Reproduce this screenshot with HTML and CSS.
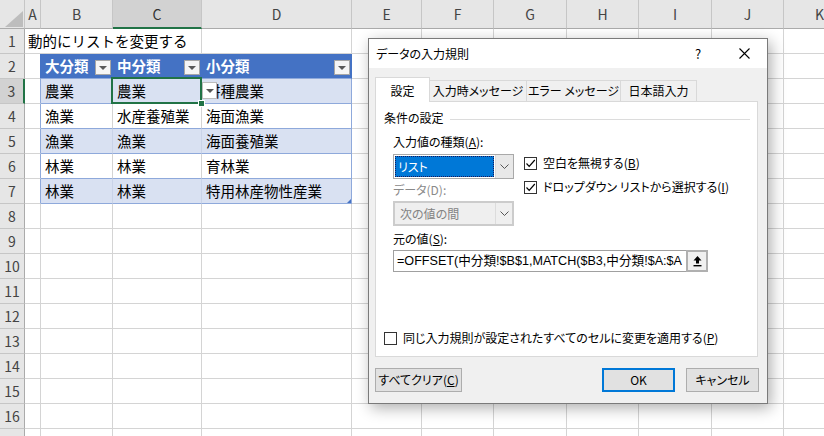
FILE: index.html
```html
<!DOCTYPE html>
<html lang="ja">
<head>
<meta charset="utf-8">
<title>データの入力規則</title>
<link rel="stylesheet" href="styles.css">
</head>
<body>
<div class="sheet">
  <div class="ch corner"><svg width="24" height="28" viewBox="0 0 24 28"><polygon points="5,27 23,27 23,11" fill="#bdbdbd"/></svg></div>
  <div class="ch">A</div><div class="ch">B</div><div class="ch sel">C</div><div class="ch">D</div><div class="ch">E</div><div class="ch">F</div><div class="ch">G</div><div class="ch">H</div><div class="ch">I</div><div class="ch">J</div><div class="ch">K</div>

  <div class="rh">1</div><div class="c title">動的にリストを変更する</div><div class="c"></div><div class="c"></div><div class="c"></div><div class="c"></div><div class="c"></div><div class="c"></div><div class="c"></div><div class="c"></div>

  <div class="rh">2</div><div class="c edge-h"></div>
  <div class="c th">大分類<span class="filter"></span></div>
  <div class="c th">中分類<span class="filter"></span></div>
  <div class="c th">小分類<span class="filter"></span></div>
  <div class="c"></div><div class="c"></div><div class="c"></div><div class="c"></div><div class="c"></div><div class="c"></div><div class="c"></div>

  <div class="rh sel">3</div><div class="c edge"></div>
  <div class="c band">農業</div>
  <div class="c band active">農業<span class="selbox"></span><span class="handle"></span><span class="dd"></span></div>
  <div class="c band last">耕種農業</div>
  <div class="c"></div><div class="c"></div><div class="c"></div><div class="c"></div><div class="c"></div><div class="c"></div><div class="c"></div>

  <div class="rh">4</div><div class="c edge"></div>
  <div class="c plain">漁業</div><div class="c plain">水産養殖業</div><div class="c plain last">海面漁業</div>
  <div class="c"></div><div class="c"></div><div class="c"></div><div class="c"></div><div class="c"></div><div class="c"></div><div class="c"></div>

  <div class="rh">5</div><div class="c edge"></div>
  <div class="c band">漁業</div><div class="c band">漁業</div><div class="c band last">海面養殖業</div>
  <div class="c"></div><div class="c"></div><div class="c"></div><div class="c"></div><div class="c"></div><div class="c"></div><div class="c"></div>

  <div class="rh">6</div><div class="c edge"></div>
  <div class="c plain">林業</div><div class="c plain">林業</div><div class="c plain last">育林業</div>
  <div class="c"></div><div class="c"></div><div class="c"></div><div class="c"></div><div class="c"></div><div class="c"></div><div class="c"></div>

  <div class="rh">7</div><div class="c edge"></div>
  <div class="c band">林業</div><div class="c band">林業</div><div class="c band last corner-end">特用林産物性産業<span class="resize"></span></div>
  <div class="c"></div><div class="c"></div><div class="c"></div><div class="c"></div><div class="c"></div><div class="c"></div><div class="c"></div>

  <div class="rh">8</div><div class="c"></div><div class="c"></div><div class="c"></div><div class="c"></div><div class="c"></div><div class="c"></div><div class="c"></div><div class="c"></div><div class="c"></div><div class="c"></div><div class="c"></div>
  <div class="rh">9</div><div class="c"></div><div class="c"></div><div class="c"></div><div class="c"></div><div class="c"></div><div class="c"></div><div class="c"></div><div class="c"></div><div class="c"></div><div class="c"></div><div class="c"></div>
  <div class="rh">10</div><div class="c"></div><div class="c"></div><div class="c"></div><div class="c"></div><div class="c"></div><div class="c"></div><div class="c"></div><div class="c"></div><div class="c"></div><div class="c"></div><div class="c"></div>
  <div class="rh">11</div><div class="c"></div><div class="c"></div><div class="c"></div><div class="c"></div><div class="c"></div><div class="c"></div><div class="c"></div><div class="c"></div><div class="c"></div><div class="c"></div><div class="c"></div>
  <div class="rh">12</div><div class="c"></div><div class="c"></div><div class="c"></div><div class="c"></div><div class="c"></div><div class="c"></div><div class="c"></div><div class="c"></div><div class="c"></div><div class="c"></div><div class="c"></div>
  <div class="rh">13</div><div class="c"></div><div class="c"></div><div class="c"></div><div class="c"></div><div class="c"></div><div class="c"></div><div class="c"></div><div class="c"></div><div class="c"></div><div class="c"></div><div class="c"></div>
  <div class="rh">14</div><div class="c"></div><div class="c"></div><div class="c"></div><div class="c"></div><div class="c"></div><div class="c"></div><div class="c"></div><div class="c"></div><div class="c"></div><div class="c"></div><div class="c"></div>
  <div class="rh">15</div><div class="c"></div><div class="c"></div><div class="c"></div><div class="c"></div><div class="c"></div><div class="c"></div><div class="c"></div><div class="c"></div><div class="c"></div><div class="c"></div><div class="c"></div>
  <div class="rh">16</div><div class="c"></div><div class="c"></div><div class="c"></div><div class="c"></div><div class="c"></div><div class="c"></div><div class="c"></div><div class="c"></div><div class="c"></div><div class="c"></div><div class="c"></div>
  <div class="rh"></div><div class="c"></div><div class="c"></div><div class="c"></div><div class="c"></div><div class="c"></div><div class="c"></div><div class="c"></div><div class="c"></div><div class="c"></div><div class="c"></div><div class="c"></div>
</div>

<div class="dialog">
  <div class="titlebar">
    <span class="title">データの入力規則</span>
    <span class="tb-btn">?</span>
    <span class="tb-btn"><svg width="11" height="11" viewBox="0 0 11 11"><path d="M0.5 0.5 L10.5 10.5 M10.5 0.5 L0.5 10.5" stroke="#000" stroke-width="1.1" fill="none"/></svg></span>
  </div>
  <div class="dlg-body">
    <div class="tabs">
      <div class="tab active">設定</div>
      <div class="tab w2">入力時メッセージ</div>
      <div class="tab w3">エラー メッセージ</div>
      <div class="tab w4">日本語入力</div>
    </div>
    <div class="panel">
      <div class="group-head"><span>条件の設定</span><span class="rule"></span></div>
      <div class="indent">
        <div class="label first">入力値の種類(<u>A</u>):</div>
        <div class="criteria">
          <div class="left">
            <div class="combo"><span class="sel">リスト</span><span class="arrow"><svg width="9" height="5" viewBox="0 0 9 5"><path d="M0.5 0.5 L4.5 4.5 L8.5 0.5" stroke="#555" fill="none"/></svg></span></div>
            <div class="label dis">データ(D):</div>
            <div class="combo disabled"><span class="val">次の値の間</span><span class="arrow"><svg width="9" height="5" viewBox="0 0 9 5"><path d="M0.5 0.5 L4.5 4.5 L8.5 0.5" stroke="#555" fill="none"/></svg></span></div>
          </div>
          <div class="checks">
            <div class="chk"><span class="box"><svg width="11" height="11" viewBox="0 0 11 11"><path d="M1.5 5.5 L4.2 8.3 L9.8 2" stroke="#000" stroke-width="1.2" fill="none"/></svg></span><span>空白を無視する(<u>B</u>)</span></div>
            <div class="chk second"><span class="box"><svg width="11" height="11" viewBox="0 0 11 11"><path d="M1.5 5.5 L4.2 8.3 L9.8 2" stroke="#000" stroke-width="1.2" fill="none"/></svg></span><span>ドロップダウン リストから選択する(<u>I</u>)</span></div>
          </div>
        </div>
        <div class="label src">元の値(<u>S</u>):</div>
        <div class="source">
          <span class="formula">=OFFSET(中分類!$B$1,MATCH($B3,中分類!$A:$A</span>
          <span class="ref-btn"><svg width="11" height="12" viewBox="0 0 11 12"><path d="M5.5 1 L1.5 5.5 L4 5.5 L4 8.5 L7 8.5 L7 5.5 L9.5 5.5 Z" fill="#000"/><rect x="1.5" y="10" width="8" height="1.4" fill="#000"/></svg></span>
        </div>
      </div>
      <div class="chk apply"><span class="box"></span><span>同じ入力規則が設定されたすべてのセルに変更を適用する(<u>P</u>)</span></div>
    </div>
    <div class="buttons">
      <span class="btn clear">すべてクリア(<u>C</u>)</span>
      <span class="btn ok">OK</span>
      <span class="btn cancel">キャンセル</span>
    </div>
  </div>
</div>
</body>
</html>
```
FILE: styles.css
```css
body {
  margin: 0;
  width: 824px;
  height: 436px;
  overflow: hidden;
  position: relative;
  background: #fff;
  font-family: "Noto Sans CJK JP", sans-serif;
}

/* ---------- spreadsheet ---------- */
.sheet {
  display: grid;
  grid-template-columns: 25px 16px 72px 89px 150px 70px 72px 73px 72px 73px 72px 72px;
  grid-template-rows: 29px;
  grid-auto-rows: 25px;
}
.sheet > div {
  box-sizing: border-box;
  border-right: 1px solid #d4d4d4;
  border-bottom: 1px solid #d4d4d4;
  white-space: nowrap;
}
.ch {
  background: #e6e6e6;
  border-right-color: #c6c6c6 !important;
  border-bottom-color: #ababab !important;
  text-align: center;
  font-size: 14px;
  line-height: 28px;
  color: #444;
}
.ch.sel {
  background: #d2d2d2;
  border-bottom: 2px solid #217346 !important;
  color: #333;
}
.corner svg { display: block; }
.rh {
  background: #e6e6e6;
  border-right-color: #ababab !important;
  border-bottom-color: #c6c6c6 !important;
  text-align: center;
  font-size: 14px;
  line-height: 24px;
  color: #444;
}
.rh.sel {
  background: #d2d2d2;
  border-right: 2px solid #217346 !important;
}
.c {
  font-size: 14.5px;
  line-height: 24px;
  padding-left: 4px;
  color: #000;
  overflow: hidden;
}
.c.title {
  grid-column: span 3;
  padding-left: 3px;
}
.c.edge-h { border-right-color: #4472c4; }
.c.edge { border-right-color: #8ea9db; }
.c.th {
  position: relative;
  background: #4472c4;
  color: #fff;
  font-weight: bold;
  border-right-color: #4472c4;
  border-bottom-color: #8ea9db;
}
.filter {
  position: absolute;
  right: 1px;
  top: 6px;
  width: 16px;
  height: 15px;
  box-sizing: border-box;
  background: #f5f5f5;
  border: 1px solid #a6a6a6;
}
.filter::after, .dd::after {
  content: "";
  position: absolute;
  left: 3px;
  top: 5px;
  border-left: 4px solid transparent;
  border-right: 4px solid transparent;
  border-top: 4px solid #595959;
}
.c.band {
  background: #d9e1f2;
  border-right-color: #c9d3e8;
  border-bottom-color: #8ea9db;
}
.c.plain {
  border-bottom-color: #8ea9db;
}
.c.last { border-right-color: #8ea9db; }
.c.active {
  position: relative;
  overflow: visible;
}
.selbox {
  position: absolute;
  left: -2px;
  top: -2px;
  right: -1px;
  bottom: -1px;
  border: 2px solid #217346;
  z-index: 2;
}
.handle {
  position: absolute;
  right: -4px;
  bottom: -4px;
  width: 5px;
  height: 5px;
  background: #217346;
  border: 1px solid #fff;
  z-index: 3;
}
.dd {
  position: absolute;
  left: calc(100% + 1px);
  top: 3px;
  width: 15px;
  height: 17px;
  box-sizing: border-box;
  background: #fff;
  border: 1px solid #bcbcbc;
  z-index: 2;
}
.dd::after { top: 6px; left: 3px; }
.c.corner-end { position: relative; }
.resize {
  position: absolute;
  right: 0;
  bottom: 0;
  width: 0;
  height: 0;
  border-left: 4px solid transparent;
  border-bottom: 4px solid #4472c4;
}

/* ---------- dialog ---------- */
.dialog {
  position: absolute;
  left: 368px;
  top: 38px;
  width: 400px;
  height: 366px;
  box-sizing: border-box;
  border: 1px solid #7a7a7a;
  background: #f0f0f0;
  box-shadow: 3px 4px 14px rgba(0, 0, 0, 0.32);
  font-size: 12px;
  font-feature-settings: "palt";
  color: #000;
  z-index: 10;
}
.titlebar {
  height: 29px;
  background: #fff;
  display: flex;
  align-items: center;
  padding-left: 7px;
}
.title { flex: 1; }
.tb-btn {
  width: 46px;
  height: 29px;
  display: flex;
  align-items: center;
  justify-content: center;
  font-size: 13px;
}
.dlg-body {
  padding: 9px 9px 11px 6px;
}
.tabs {
  display: flex;
  align-items: flex-end;
  height: 24px;
}
.tab {
  box-sizing: border-box;
  height: 21px;
  line-height: 20px;
  text-align: center;
  border: 1px solid #d9d9d9;
  border-bottom: none;
  border-left: none;
  background: #f0f0f0;
  white-space: nowrap;
}
.tab.active {
  width: 55px;
  height: 25px;
  padding-top: 3px;
  line-height: 20px;
  border-left: 1px solid #d9d9d9;
  background: #fff;
  margin-bottom: -1px;
  position: relative;
  z-index: 1;
}
.tab.w2 { width: 97px; }
.tab.w3 { width: 94px; }
.tab.w4 { width: 76px; }
.panel {
  box-sizing: border-box;
  height: 256px;
  background: #fff;
  border: 1px solid #d9d9d9;
  padding: 8px 7px 10px 8px;
  display: flex;
  flex-direction: column;
}
.group-head {
  display: flex;
  align-items: center;
  gap: 6px;
  height: 16px;
  line-height: 16px;
}
.rule {
  flex: 1;
  height: 1px;
  background: #dcdcdc;
  margin-top: 3px;
}
.indent { padding-left: 9px; }
.label {
  height: 16px;
  line-height: 16px;
}
.label.first { margin-top: 8px; }
.label.dis { margin-top: 3px; color: #8a8a8a; }
.label.src { margin-top: 5px; }
.criteria {
  display: flex;
  margin-top: 4px;
}
.left {
  display: flex;
  flex-direction: column;
  width: 121px;
}
.combo {
  box-sizing: border-box;
  height: 25px;
  border: 1px solid #a9a9a9;
  background: #fff;
  display: flex;
}
.combo .sel {
  flex: 1;
  margin: 1px;
  background: #0078d7;
  color: #fff;
  border: 1px dotted #1a1a5a;
  padding-left: 2px;
  line-height: 19px;
}
.combo .arrow {
  width: 17px;
  display: flex;
  align-items: center;
  justify-content: center;
  background: #e8e8e8;
  border-left: 1px solid #dadada;
}
.combo.disabled {
  margin-top: 3px;
  background: #efefef;
  border: 2px solid #cccccc;
}
.combo.disabled .val {
  flex: 1;
  color: #838383;
  padding-left: 5px;
  line-height: 21px;
}
.combo.disabled .arrow {
  background: #efefef;
  border-left: 1px solid #dcdcdc;
  width: 16px;
}
.checks {
  margin-left: 10px;
  padding-top: 1px;
}
.chk {
  display: flex;
  align-items: center;
  gap: 6px;
  height: 16px;
  line-height: 16px;
  white-space: nowrap;
}
.chk.second { margin-top: 8px; }
.box {
  box-sizing: border-box;
  width: 13px;
  height: 13px;
  border: 1px solid #333;
  background: #fff;
  display: flex;
  align-items: center;
  justify-content: center;
}
.box svg { display: block; }
.source {
  margin-top: 3px;
  width: 315px;
  height: 22px;
  box-sizing: border-box;
  border: 1px solid #a0a0a0;
  background: #fff;
  display: flex;
}
.formula {
  flex: 1;
  overflow: hidden;
  white-space: nowrap;
  padding-left: 3px;
  line-height: 20px;
  font-family: "Liberation Sans", "Noto Sans CJK JP", sans-serif;
  font-size: 12.6px;
  font-feature-settings: normal;
}
.ref-btn {
  box-sizing: border-box;
  width: 22px;
  height: 22px;
  margin: -1px -1px -1px 0;
  border: 2px solid #b0b0b0;
  background: #f0f0f0;
  display: flex;
  align-items: center;
  justify-content: center;
}
.chk.apply { margin-top: auto; }
.buttons {
  display: flex;
  margin-top: 11px;
  height: 24px;
}
.btn {
  box-sizing: border-box;
  height: 24px;
  line-height: 22px;
  text-align: center;
  background: #e1e1e1;
  border: 1px solid #adadad;
  white-space: nowrap;
}
.btn.clear { width: 87px; }
.btn.ok {
  width: 73px;
  margin-left: auto;
  border: 2px solid #0078d7;
  line-height: 20px;
}
.btn.cancel {
  width: 73px;
  margin-left: 11px;
  margin-right: -1px;
}
```
